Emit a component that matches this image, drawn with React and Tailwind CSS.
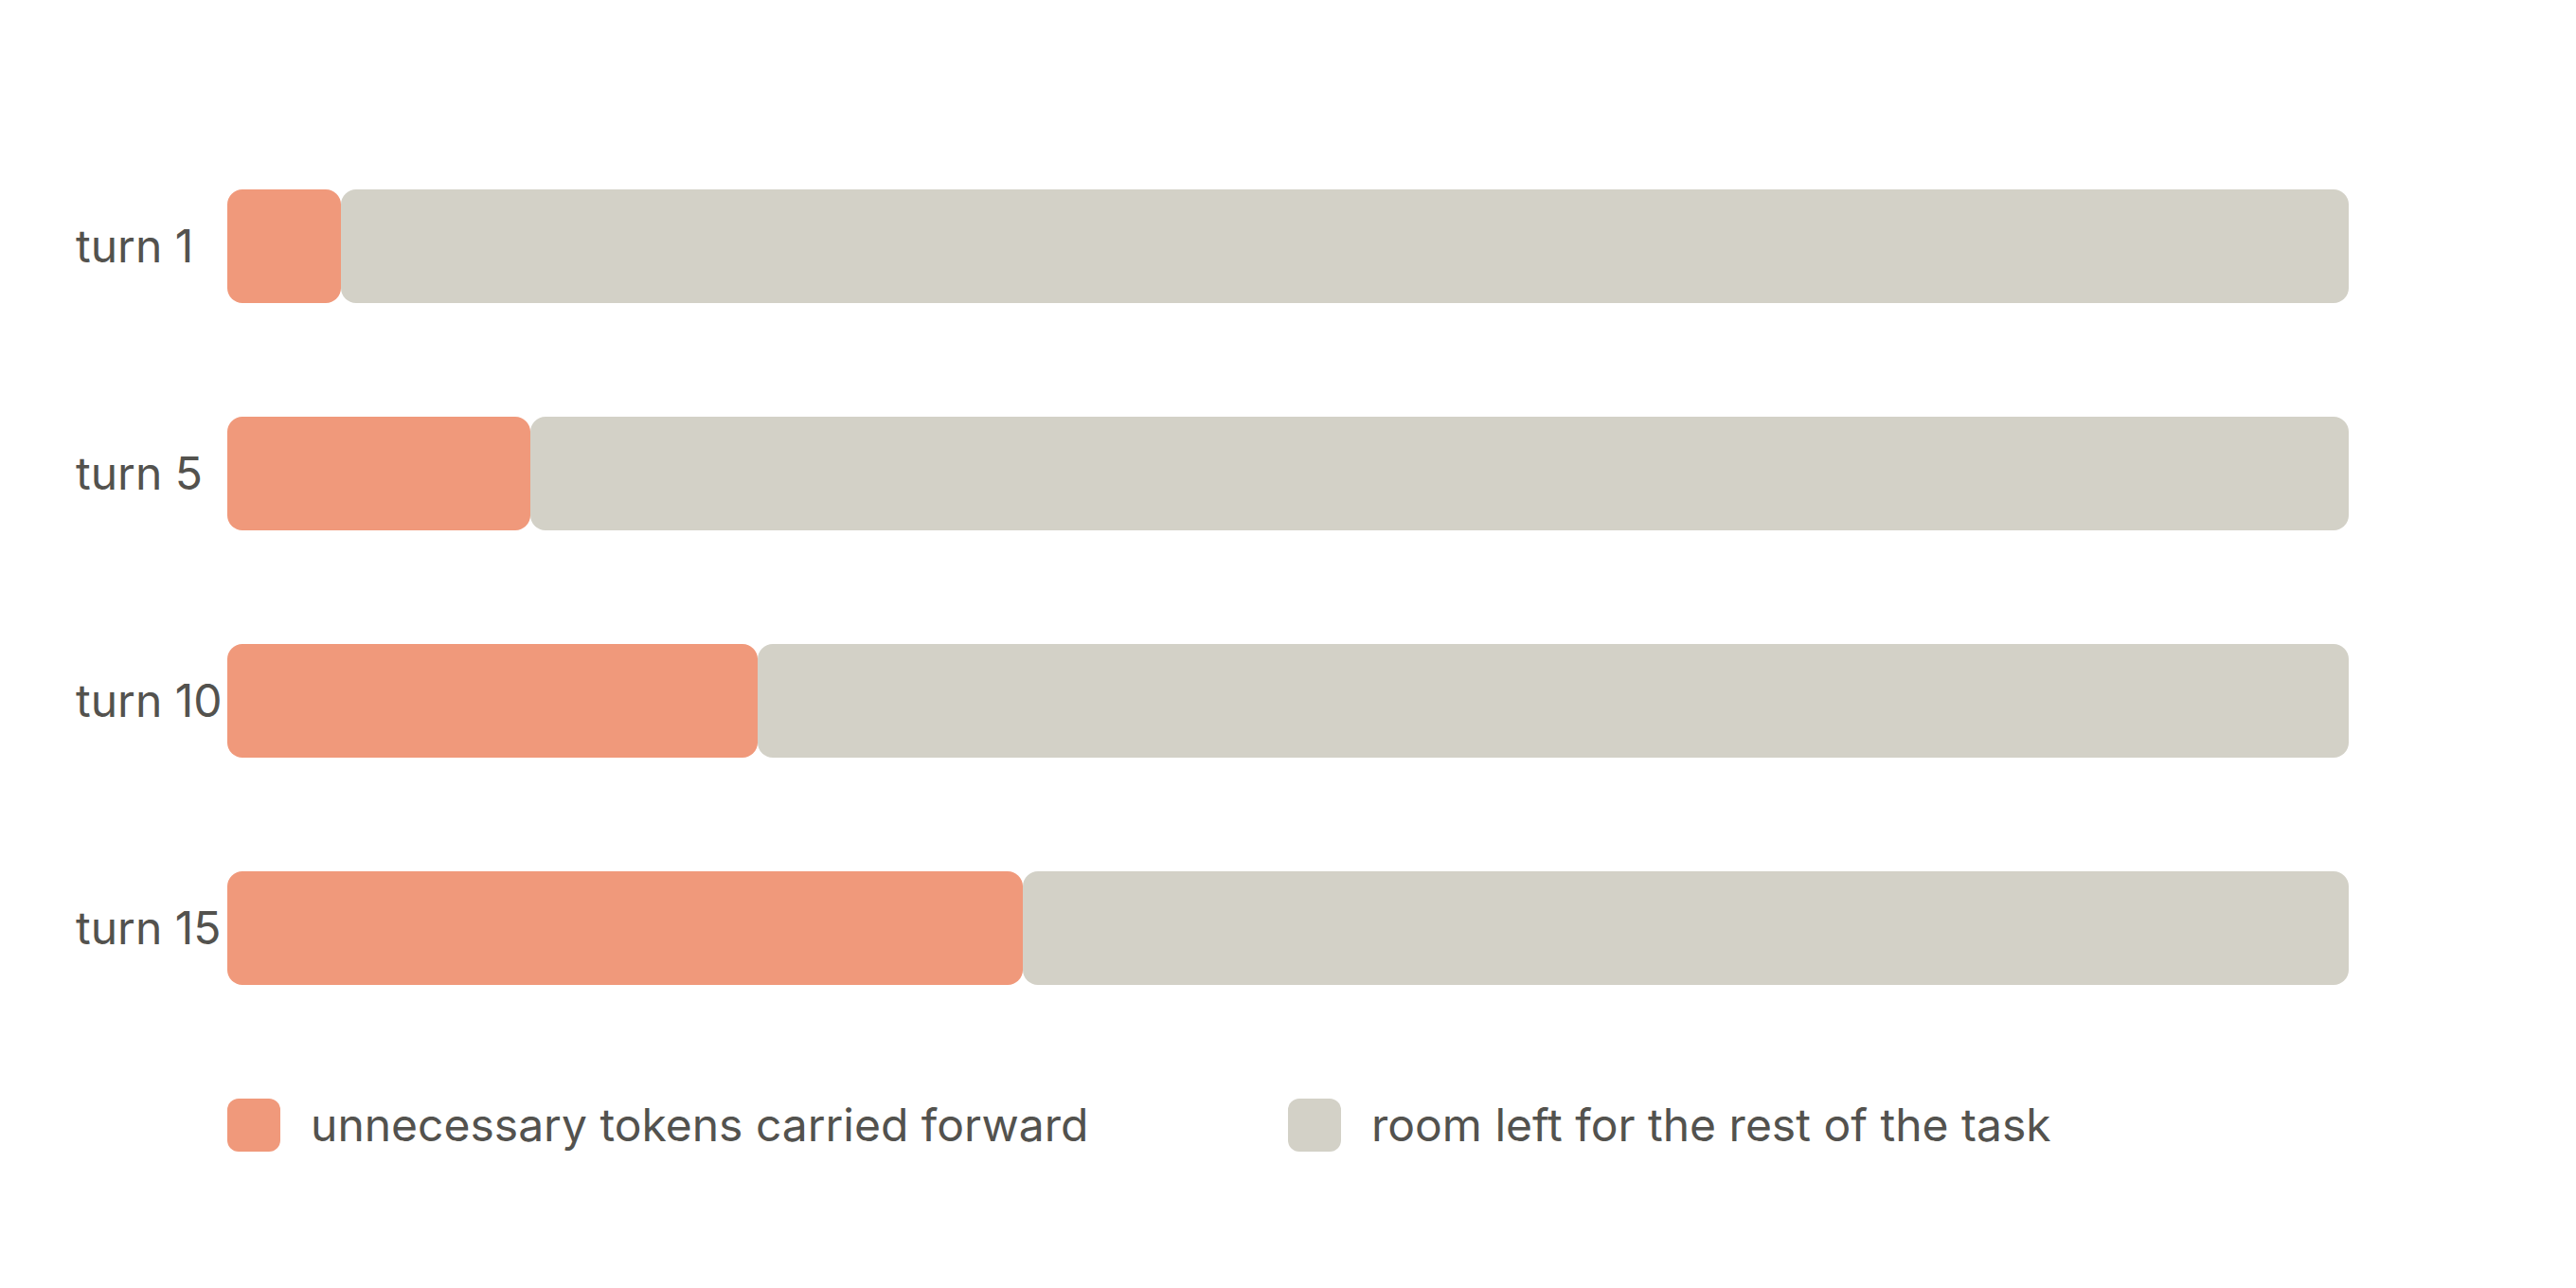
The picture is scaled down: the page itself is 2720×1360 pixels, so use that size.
import React from 'react';

const rows = [
  { label: 'turn 1', used: 120 },
  { label: 'turn 5', used: 320 },
  { label: 'turn 10', used: 560 },
  { label: 'turn 15', used: 840 },
];

export default function App() {
  return (
    <div
      className="w-[2720px] h-[1360px] bg-white text-[#53524e] px-[80px] pt-[200px]"
      style={{ fontFamily: 'Inter, "Noto Sans", sans-serif' }}
    >
      {/* Bars */}
      <div className="flex flex-col gap-[120px]">
        {rows.map((row) => (
          <div key={row.label} className="flex items-center">
            <div className="w-[160px] text-[48px] leading-none whitespace-nowrap">{row.label}</div>
            <div className="flex w-[2240px] h-[120px]">
              <div className="h-full bg-[#f0997b] rounded-[16px]" style={{ width: row.used }} />
              <div className="h-full flex-1 bg-[#d3d1c7] rounded-[16px]" />
            </div>
          </div>
        ))}
      </div>

      {/* Legend */}
      <div className="ml-[160px] mt-[120px] w-[2240px] grid grid-cols-2">
        <div className="flex items-center gap-[32px]">
          <div className="size-[56px] rounded-[12px] bg-[#f0997b]" />
          <span className="text-[48px] leading-none">unnecessary tokens carried forward</span>
        </div>
        <div className="flex items-center gap-[32px]">
          <div className="size-[56px] rounded-[12px] bg-[#d3d1c7]" />
          <span className="text-[48px] leading-none">room left for the rest of the task</span>
        </div>
      </div>
    </div>
  );
}
